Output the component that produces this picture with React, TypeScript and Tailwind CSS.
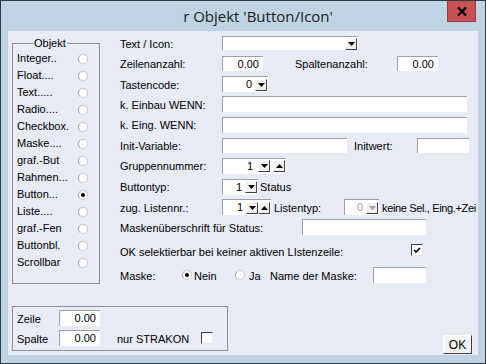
import React from 'react';

const font = { fontFamily: '"Liberation Sans", Arial, sans-serif' };

// sunken white field
const Field: React.FC<{ w: string; h?: string; children?: React.ReactNode; className?: string }> = ({
  w,
  h = 'h-[16px]',
  children,
  className = '',
}) => (
  <div className={`${w} ${h} shrink-0 bg-white border-t border-l border-[#a0a0a0] flex items-center ${className}`}>
    {children}
  </div>
);

const Arrow: React.FC<{ up?: boolean; disabled?: boolean }> = ({ up, disabled }) => (
  <div className="w-[12px] h-[12px] bg-[#f0f0f0] border border-t-white border-l-white border-r-[#404040] border-b-[#404040] flex items-center justify-center shrink-0">
    <svg width="7" height="4" viewBox="0 0 7 4">
      <polygon
        points={up ? '0,4 7,4 3.5,0' : '0,0 7,0 3.5,4'}
        fill={disabled ? '#a0a0a0' : '#000'}
      />
    </svg>
  </div>
);

const Radio: React.FC<{ on?: boolean }> = ({ on }) => (
  <div className="w-[10px] h-[10px] rounded-full bg-white border border-[#c8c8c8] border-l-[#a0a0a0] flex items-center justify-center shrink-0">
    {on && <div className="w-[4px] h-[4px] rounded-full bg-black" />}
  </div>
);

const Check: React.FC<{ on?: boolean }> = ({ on }) => (
  <div className="w-[12px] h-[12px] bg-white border border-t-[#404040] border-l-[#404040] border-r-[#e8e8e8] border-b-[#e8e8e8] flex items-center justify-center shrink-0">
    {on && (
      <svg width="8" height="7" viewBox="0 0 8 7">
        <path d="M1 3 L3 5 L7 1" stroke="#000" strokeWidth="1.6" fill="none" />
      </svg>
    )}
  </div>
);

const objekte = [
  'Integer..',
  'Float....',
  'Text.....',
  'Radio....',
  'Checkbox.',
  'Maske....',
  'graf.-But',
  'Rahmen...',
  'Button...',
  'Liste....',
  'graf.-Fen',
  'Buttonbl.',
  'Scrollbar',
];

export default function App() {
  return (
    <div
      className="w-[486px] h-[364px] border border-[#2f3a44] bg-[#bfd3e5] flex flex-col text-[11px] text-black leading-none"
      style={font}
    >
      {/* Title bar */}
      <div className="h-[30px] relative flex items-center justify-center pl-[30px] shrink-0">
        <span className="text-[15px] text-[#1b1b1b]" style={{ fontFamily: '"Open Sans", "Noto Sans", sans-serif' }}>
          r Objekt 'Button/Icon'
        </span>
        <div className="absolute top-0 right-[9px] w-[29px] h-[21px] bg-[#c75050] border border-t-0 border-[#9c3a3a] flex items-center justify-center">
          <svg width="10" height="9" viewBox="0 0 10 9">
            <path d="M1 0.5 L9 8.5 M9 0.5 L1 8.5" stroke="#000" strokeWidth="2.2" />
          </svg>
        </div>
      </div>

      {/* Client area */}
      <div className="mx-[7px] h-[324px] bg-[#e6ebf5] overflow-hidden flex flex-col shrink-0">
        <div className="flex items-start">
          {/* Objekt group */}
          <div className="relative shrink-0 ml-[4px] mt-[12px] w-[88px] h-[241px] border border-[#8f8f8f] pt-[6px] pl-[4px]">
            <span className="absolute -top-[6px] left-[20px] px-px bg-[#e6ebf5]">Objekt</span>
            {objekte.map((o, i) => (
              <div key={o} className="h-[17px] flex items-center">
                <span className="w-[61px]">{o}</span>
                <Radio on={i === 8} />
              </div>
            ))}
          </div>

          {/* Form */}
          <div className="ml-[20px] mt-[2px] flex flex-col whitespace-nowrap">
            <div className="h-[20px] flex items-center">
              <span className="w-[102px] shrink-0 pt-[3px]">Text / Icon:</span>
              <Field w="w-[136px]" h="h-[14px]" className="justify-end pr-px">
                <Arrow />
              </Field>
            </div>
            <div className="h-[21px] flex items-center">
              <span className="w-[102px] shrink-0 pt-[2px]">Zeilenanzahl:</span>
              <Field w="w-[41px]" h="h-[15px]" className="justify-end pr-[4px]">0.00</Field>
              <span className="ml-[32px] w-[102px] shrink-0 pt-[2px]">Spaltenanzahl:</span>
              <Field w="w-[41px]" h="h-[15px]" className="justify-end pr-[4px]">0.00</Field>
            </div>
            <div className="h-[20px] flex items-center">
              <span className="w-[102px] shrink-0 pt-[2px]">Tastencode:</span>
              <Field w="w-[46px]" className="justify-end pr-px gap-[3px]">
                <span>0</span>
                <Arrow />
              </Field>
            </div>
            <div className="h-[20px] flex items-center">
              <span className="w-[102px] shrink-0 pt-[2px]">k. Einbau WENN:</span>
              <Field w="w-[245px]" />
            </div>
            <div className="h-[21px] flex items-center">
              <span className="w-[102px] shrink-0 pt-[2px]">k. Eing. WENN:</span>
              <Field w="w-[245px]" />
            </div>
            <div className="h-[20px] flex items-center">
              <span className="w-[102px] shrink-0 pt-[2px]">Init-Variable:</span>
              <Field w="w-[125px]" h="h-[15px]" />
              <span className="ml-[7px] w-[63px] shrink-0 pt-[2px]">Initwert:</span>
              <Field w="w-[52px]" h="h-[15px]" />
            </div>
            <div className="h-[21px] flex items-center">
              <span className="w-[102px] shrink-0 pt-[2px]">Gruppennummer:</span>
              <Field w="w-[64px]" className="justify-end pr-px">
                <span className="mr-[5px]">1</span>
                <Arrow />
                <div className="w-[3px]" />
                <Arrow up />
              </Field>
            </div>
            <div className="h-[21px] flex items-center">
              <span className="w-[102px] shrink-0 pt-[2px]">Buttontyp:</span>
              <Field w="w-[36px]" className="justify-end pr-px gap-[3px]">
                <span>1</span>
                <Arrow />
              </Field>
              <span className="ml-[2px] pt-[2px]">Status</span>
            </div>
            <div className="h-[20px] flex items-center">
              <span className="w-[102px] shrink-0 pt-[2px]">zug. Listennr.:</span>
              <Field w="w-[49px]" className="justify-end pr-px">
                <span className="mr-[3px]">1</span>
                <Arrow />
                <Arrow up />
              </Field>
              <span className="ml-[3px] w-[70px] shrink-0 pt-[2px]">Listentyp:</span>
              <Field w="w-[35px]" className="justify-end pr-px gap-[3px]">
                <span className="text-[#a0a0a0]">0</span>
                <Arrow disabled />
              </Field>
              <span className="ml-[3px] pt-[2px] tracking-[-0.35px]">keine Sel., Eing.+Zei</span>
            </div>
            <div className="h-[20px] flex items-center">
              <span className="w-[182px] shrink-0 pt-[2px]">Maskenüberschrift für Status:</span>
              <Field w="w-[124px]" />
            </div>
            <div className="h-[26px] flex items-center">
              <span className="w-[291px] shrink-0 pt-[4px]">OK selektierbar bei keiner aktiven LIstenzeile:</span>
              <Check on />
            </div>
            <div className="h-[24px] flex items-center">
              <span className="w-[62px] shrink-0 pt-[2px]">Maske:</span>
              <Radio on />
              <span className="ml-[2px] w-[41px] shrink-0 pt-[2px]">Nein</span>
              <Radio />
              <span className="ml-[4px] w-[21px] shrink-0 pt-[2px]">Ja</span>
              <span className="w-[103px] shrink-0 pt-[2px]">Name der Maske:</span>
              <Field w="w-[53px]" />
            </div>
          </div>
        </div>

        {/* Bottom */}
        <div className="flex items-start mt-[19px]">
          <div className="ml-[4px] w-[216px] h-[45px] border border-[#8f8f8f] pt-px pl-[4px] whitespace-nowrap">
            <div className="h-[20px] flex items-center">
              <span className="w-[42px] pt-[2px]">Zeile</span>
              <Field w="w-[41px]" className="justify-end pr-[4px]">0.00</Field>
            </div>
            <div className="h-[20px] flex items-center">
              <span className="w-[42px] pt-[2px]">Spalte</span>
              <Field w="w-[41px]" className="justify-end pr-[4px]">0.00</Field>
              <span className="ml-[17px] w-[84px] pt-[2px]">nur STRAKON</span>
              <Check />
            </div>
          </div>
          <button className="ml-auto mr-[6px] mt-[29px] w-[29px] h-[19px] bg-[#f4f4f4] border border-t-white border-l-white border-r-[#404040] border-b-[#404040] text-[12px] flex items-center justify-center pt-px">
            OK
          </button>
        </div>
      </div>
    </div>
  );
}
